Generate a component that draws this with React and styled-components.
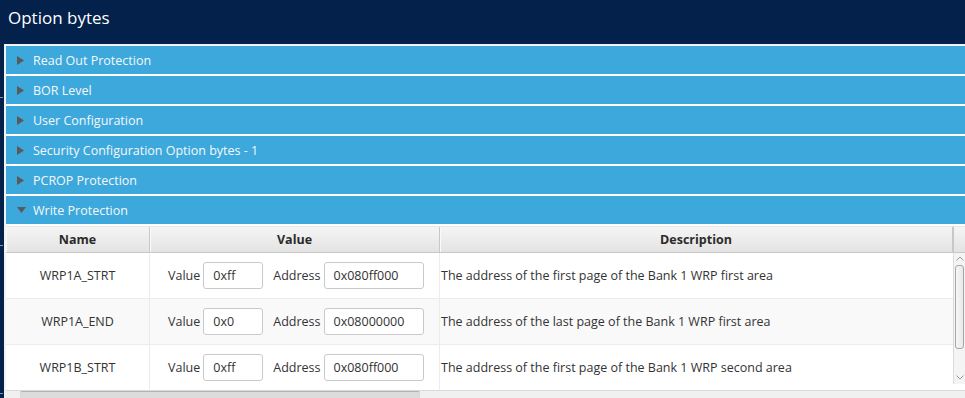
import React from 'react';
import styled, { createGlobalStyle } from 'styled-components';

const GlobalStyle = createGlobalStyle`
  html, body {
    margin: 0;
    padding: 0;
    overflow: hidden;
  }
  body {
    width: 965px;
    height: 398px;
    background: #03214a;
    font-family: "Open Sans", "Noto Sans", sans-serif;
  }
`;

const sections = [
  'Read Out Protection',
  'BOR Level',
  'User Configuration',
  'Security Configuration Option bytes - 1',
  'PCROP Protection',
];

const rows = [
  { name: 'WRP1A_STRT', value: '0xff', address: '0x080ff000', desc: 'The address of the first page of the Bank 1 WRP first area' },
  { name: 'WRP1A_END', value: '0x0', address: '0x08000000', desc: 'The address of the last page of the Bank 1 WRP first area' },
  { name: 'WRP1B_STRT', value: '0xff', address: '0x080ff000', desc: 'The address of the first page of the Bank 1 WRP second area' },
  { name: '', value: '', address: '', desc: '' },
];

const Arrow = ({ open }) => (
  <ArrowBox>
    {open ? (
      <svg width="9" height="6" viewBox="0 0 9 6">
        <path d="M0 0 L9 0 L4.5 6 Z" fill="#5a5a5a" />
      </svg>
    ) : (
      <svg width="7" height="9" viewBox="0 0 7 9">
        <path d="M0 0 L7 4.5 L0 9 Z" fill="#5a5a5a" />
      </svg>
    )}
  </ArrowBox>
);

const App = () => (
  <>
    <GlobalStyle />
    <Page>
      <Ruler />
      <Main>
        <Header>Option bytes</Header>
        <Panel>
          {sections.map(s => (
            <Section key={s}>
              <Arrow />
              <SectionTitle>{s}</SectionTitle>
            </Section>
          ))}
          <Section>
            <Arrow open />
            <SectionTitle>Write Protection</SectionTitle>
          </Section>
          <TableWrap>
            <TableMain>
              <HeadRow>
                <HeadCell>Name</HeadCell>
                <HeadCell>Value</HeadCell>
                <HeadCell>Description</HeadCell>
              </HeadRow>
              {rows.map((r, i) => (
                <Row key={i} $odd={i % 2 === 1}>
                  <NameCell>{r.name}</NameCell>
                  <ValueCell>
                    {r.name && (
                      <>
                        <FieldLabel>Value</FieldLabel>
                        <Field $w={60}>{r.value}</Field>
                        <FieldLabel $gap>Address</FieldLabel>
                        <Field $w={100}>{r.address}</Field>
                      </>
                    )}
                  </ValueCell>
                  <DescCell>{r.desc}</DescCell>
                </Row>
              ))}
            </TableMain>
            <SideColumn>
              <CornerCell />
              <VScroll>
                <Chevron viewBox="0 0 8 5">
                  <path d="M0.5 4.5 L4 1 L7.5 4.5" />
                </Chevron>
                <Thumb />
                <Chevron viewBox="0 0 8 5">
                  <path d="M0.5 0.5 L4 4 L7.5 0.5" />
                </Chevron>
              </VScroll>
            </SideColumn>
          </TableWrap>
          <HScroll>
            <HThumb />
          </HScroll>
        </Panel>
      </Main>
    </Page>
  </>
);

export default App;

const Page = styled.div`
  display: flex;
  height: 398px;
  overflow: hidden;
`;

const Ruler = styled.div`
  width: 4px;
  flex: none;
  background:
    repeating-linear-gradient(
      to bottom,
      transparent 0,
      transparent 97px,
      #8a94a6 97px,
      #8a94a6 98px,
      transparent 98px,
      transparent 148px
    );
  background-size: 3px 100%;
  background-repeat: no-repeat;
  background-position: 0 0;
`;

const Main = styled.div`
  flex: 1;
  display: flex;
  flex-direction: column;
  min-width: 0;
`;

const Header = styled.div`
  height: 44px;
  margin-left: -4px;
  padding-left: 8px;
  padding-top: 5px;
  box-sizing: border-box;
  color: #ffffff;
  font-size: 17px;
  line-height: 26px;
`;

const Panel = styled.div`
  flex: 1;
  background: #ffffff;
  border-top: 2px solid #f2f2f2;
  border-left: 2px solid #f2f2f2;
  display: flex;
  flex-direction: column;
  min-height: 0;
`;

const Section = styled.div`
  height: 28px;
  flex: none;
  background: #3da8db;
  border-bottom: 2px solid #ffffff;
  display: flex;
  align-items: center;
  padding-left: 11px;
`;

const ArrowBox = styled.span`
  width: 9px;
  height: 9px;
  display: flex;
  align-items: center;
  justify-content: flex-start;
`;

const SectionTitle = styled.span`
  margin-left: 7px;
  color: #f4f8fb;
  font-size: 12.5px;
`;

const TableWrap = styled.div`
  display: flex;
  flex: 1;
  min-height: 0;
`;

const TableMain = styled.div`
  width: 947px;
  flex: none;
  overflow: hidden;
`;

const colTemplate = `144px 290px 1fr`;

const HeadRow = styled.div`
  display: grid;
  grid-template-columns: ${colTemplate};
  height: 27px;
  box-sizing: border-box;
  background: linear-gradient(to bottom, #f5f5f5, #e3e3e3);
  border-top: 1px solid #e6e6e6;
  border-bottom: 1px solid #c8c8c8;
`;

const HeadCell = styled.div`
  display: flex;
  align-items: center;
  justify-content: center;
  font-size: 12.5px;
  font-weight: 700;
  color: #2b2b2b;
  border-right: 1px solid #c8c8c8;
  box-shadow: inset 1px 0 0 #fafafa;
`;

const Row = styled.div`
  display: grid;
  grid-template-columns: ${colTemplate};
  height: 46px;
  background: ${props => (props.$odd ? '#f9f9f9' : '#ffffff')};
  border-bottom: 1px solid #ececec;
  box-sizing: border-box;
`;

const Cell = styled.div`
  display: flex;
  align-items: center;
  font-size: 12.5px;
  color: #333333;
  border-right: 1px solid #ececec;
`;

const NameCell = styled(Cell)`
  justify-content: center;
`;

const ValueCell = styled(Cell)`
  padding-left: 18px;
`;

const DescCell = styled(Cell)`
  padding-left: 1px;
  border-right: none;
`;

const FieldLabel = styled.span`
  margin-left: ${props => (props.$gap ? '10px' : '0')};
  margin-right: 3px;
`;

const Field = styled.div`
  width: ${props => props.$w}px;
  height: 27px;
  box-sizing: border-box;
  border: 1px solid #c9c9c9;
  border-radius: 3px;
  background: #ffffff;
  display: flex;
  align-items: center;
  padding-left: 9px;
  font-size: 12.5px;
  color: #333333;
`;

const SideColumn = styled.div`
  flex: 1;
  display: flex;
  flex-direction: column;
`;

const CornerCell = styled.div`
  height: 27px;
  box-sizing: border-box;
  background: linear-gradient(to bottom, #f5f5f5, #e3e3e3);
  border-top: 1px solid #e6e6e6;
  border-bottom: 1px solid #c8c8c8;
  border-left: 1px solid #c8c8c8;
`;

const VScroll = styled.div`
  flex: 1;
  background: #f4f4f4;
  border-left: 1px solid #dcdcdc;
  display: flex;
  flex-direction: column;
  align-items: center;
  padding: 3px 0 4px;
  gap: 4px;
  margin-bottom: 6px;
`;

const Chevron = styled.svg`
  width: 8px;
  height: 5px;
  flex: none;
  fill: none;
  stroke: #9a9a9a;
  stroke-width: 1;
`;

const Thumb = styled.div`
  width: 9px;
  height: 84px;
  box-sizing: border-box;
  border: 1px solid #a6a6a6;
  border-radius: 3px;
  background: linear-gradient(to right, #f7f7f7, #e8e8e8);
  margin-bottom: auto;
`;

const HScroll = styled.div`
  height: 7px;
  flex: none;
  background: #f0f0f0;
  border-top: 1px solid #dadada;
  padding-left: 14px;
`;

const HThumb = styled.div`
  width: 400px;
  height: 6px;
  background: #dcdcdc;
  border-top: 1px solid #b4b4b4;
  border-radius: 2px 2px 0 0;
`;
